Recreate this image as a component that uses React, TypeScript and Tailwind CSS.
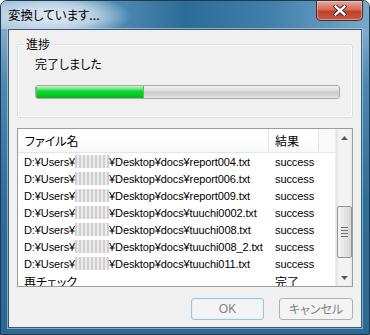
import React from 'react';

const rows = [
    { file: 'report004.txt', result: 'success' },
    { file: 'report006.txt', result: 'success' },
    { file: 'report009.txt', result: 'success' },
    { file: 'tuuchi0002.txt', result: 'success' },
    { file: 'tuuchi008.txt', result: 'success' },
    { file: 'tuuchi008_2.txt', result: 'success' },
    { file: 'tuuchi011.txt', result: 'success' },
];

function Blur() {
    return (
        <span className="inline-block h-[13px] w-[34px] align-[-2px] bg-[repeating-linear-gradient(90deg,#cfcfcf_0_2px,#ececec_2px_4px)] blur-[0.7px]" />
    );
}

function CloseButton() {
    return (
        <div className="flex h-[20px] w-[47px] items-center justify-center rounded-b-[5px] border border-t-0 border-[#4a2a26] bg-[linear-gradient(to_bottom,#e8a898_0%,#d66a58_45%,#c0402c_55%,#c85a44_100%)] shadow-[inset_0_0_0_1px_rgba(255,220,210,0.45)]">
            <svg width="14" height="11" viewBox="0 0 14 11">
                <path d="M2.5 1.5 L11.5 9.5 M11.5 1.5 L2.5 9.5" stroke="#3b1a14" strokeWidth="4.2" strokeLinecap="square" />
                <path d="M2.5 1.5 L11.5 9.5 M11.5 1.5 L2.5 9.5" stroke="#ffffff" strokeWidth="2.4" strokeLinecap="square" />
            </svg>
        </div>
    );
}

function Arrow({ up }: { up?: boolean }) {
    return (
        <div className="flex h-[17px] w-full items-center justify-center">
            <svg width="7" height="4" viewBox="0 0 7 4">
                <path d={up ? 'M0 4 L3.5 0 L7 4 Z' : 'M0 0 L3.5 4 L7 0 Z'} fill="#5b5b5b" />
            </svg>
        </div>
    );
}

function ScrollBar() {
    return (
        <div className="flex w-[17px] flex-col border-l border-[#ececec] bg-[linear-gradient(to_right,#e3e3e3,#f3f3f3_20%,#f3f3f3_80%,#e8e8e8)]">
            <Arrow up />
            <div className="flex-1 pt-[60px]">
                <div className="mx-auto flex h-[52px] w-[15px] flex-col items-center justify-center gap-[2px] rounded-[2px] border border-[#959595] bg-[linear-gradient(to_right,#f2f2f2,#e6e6e6_50%,#d6d6d6)]">
                    <div className="h-px w-[7px] bg-[#6f6f6f]" />
                    <div className="h-px w-[7px] bg-[#6f6f6f]" />
                    <div className="h-px w-[7px] bg-[#6f6f6f]" />
                    <div className="h-px w-[7px] bg-[#6f6f6f]" />
                </div>
            </div>
            <Arrow />
        </div>
    );
}

export default function App() {
    return (
        <div className="h-[335px] w-[370px] overflow-hidden font-['Noto_Sans_CJK_JP',sans-serif] text-[12px] text-black [font-feature-settings:'palt']">
            <div className="flex h-full w-full flex-col rounded-t-[7px] border border-[#1f3a50] bg-[linear-gradient(to_bottom,#9dbdd6_0%,#4c88b2_25%,#2f6d99_60%,#2b6893_100%)]">
                <div className="flex h-[28px] items-start justify-between rounded-t-[6px] bg-[radial-gradient(ellipse_75px_22px_at_55px_15px,rgba(235,242,248,0.95),rgba(235,242,248,0.6)_55%,rgba(235,242,248,0)_100%),linear-gradient(to_right,#9fc0da_0%,#5d95bd_25%,#2b6c96_50%,#3f7ea9_72%,#79a8c8_100%)]">
                    <span className="pl-[7px] pt-[6px] text-[12.5px] leading-[16px]">変換しています...</span>
                    <div className="mr-[6px]">
                        <CloseButton />
                    </div>
                </div>
                <div className="flex flex-1 flex-col px-[7px] pb-[6px]">
                    <div className="flex flex-1 flex-col border border-[#3d5a72] bg-[#f0f0f0] shadow-[0_0_0_1px_rgba(200,222,238,0.55)]">
                        <div className="relative mx-[8px] mt-[14px] rounded-[3px] border border-[#d5dfe5] pb-[18px] pl-[17px] pt-[11px] shadow-[inset_0_0_0_1px_#ffffff]">
                            <span className="absolute -top-[9px] left-[7px] bg-[#f0f0f0] px-px leading-[16px]">進捗</span>
                            <div className="leading-[16px]">完了しました</div>
                            <div className="mt-[13px] h-[14px] w-[305px] overflow-hidden rounded-[3px] border border-[#a9a9a9] bg-[linear-gradient(to_bottom,#f3f3f3_0%,#e2e2e2_35%,#cdcdcd_50%,#d6d6d6_80%,#e6e6e6_100%)]">
                                <div className="h-full w-[108px] bg-[linear-gradient(to_bottom,#c9f5c9_0%,#6be77f_25%,#0dd42d_45%,#08cc28_70%,#06b11f_100%)] shadow-[inset_-1px_0_0_#4cc45e,inset_1px_0_0_#4cc45e]" />
                            </div>
                        </div>
                        <div className="mx-[8px] mt-[10px] flex h-[159px] overflow-hidden border border-[#9c9c9c] bg-white">
                            <div className="flex-1 overflow-hidden">
                                <div className="flex h-[24px] items-center border-b border-[#e5e5e5] bg-[linear-gradient(to_bottom,#ffffff_0%,#ffffff_50%,#f7f8f9_100%)]">
                                    <div className="flex h-full w-[251px] items-center border-r border-[#e5e5e5] pl-[7px]">ファイル名</div>
                                    <div className="flex h-full w-[50px] items-center border-r border-[#e5e5e5] pl-[6px]">結果</div>
                                    <div className="h-full flex-1 bg-[#f9f9f9]" />
                                </div>
                                <div className="pt-[1px]">
                                    {rows.map((r) => (
                                        <div key={r.file} className="flex h-[17px] items-center whitespace-nowrap font-['Liberation_Sans','Noto_Sans_CJK_JP',sans-serif] text-[11px] leading-[17px] tracking-[-0.1px]">
                                            <div className="w-[251px] pl-[6px]">
                                                D:¥Users¥<Blur />¥Desktop¥docs¥{r.file}
                                            </div>
                                            <div className="pl-[6px]">{r.result}</div>
                                        </div>
                                    ))}
                                    <div className="flex h-[17px] items-center whitespace-nowrap leading-[17px]">
                                        <div className="w-[251px] pl-[6px]">再チェック</div>
                                        <div className="pl-[6px]">完了</div>
                                    </div>
                                </div>
                            </div>
                            <ScrollBar />
                        </div>
                        <div className="mr-[8px] mt-[11px] flex justify-end gap-[15px]">
                            <button className="h-[22px] w-[73px] rounded-[3px] border border-[#9cc3e0] bg-[#f4f4f4] font-['Liberation_Sans',sans-serif] text-[#838383] shadow-[inset_0_0_0_1px_#e6f0f8]">
                                OK
                            </button>
                            <button className="h-[22px] w-[74px] rounded-[3px] border border-[#b0b0b0] bg-[#f4f4f4] text-[#838383]">
                                キャンセル
                            </button>
                        </div>
                    </div>
                </div>
            </div>
        </div>
    );
}
